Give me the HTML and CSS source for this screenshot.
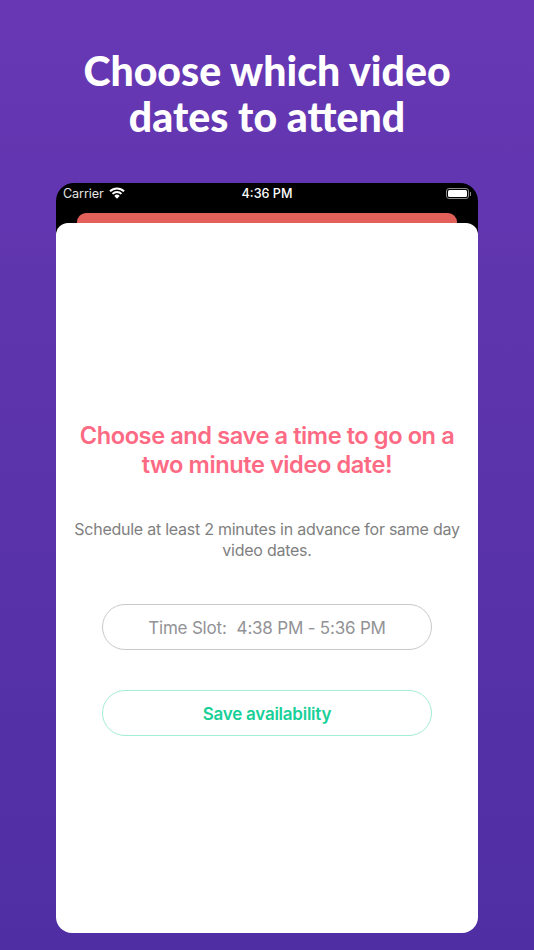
FILE: index.html
```html
<!DOCTYPE html>
<html lang="en">
<head>
<meta charset="utf-8">
<title>Choose which video dates to attend</title>
<link rel="stylesheet" href="styles.css">
</head>
<body>
<main class="screen">
  <h1 class="headline">Choose which video<br>dates to attend</h1>
  <section class="phone">
    <header class="phone-top">
      <div class="status">
        <div class="status-left">
          <span>Carrier</span>
          <svg class="wifi" viewBox="0 0 16 12" width="16" height="12" aria-hidden="true">
            <path d="M8 11.8 5.3 8.9a3.8 3.8 0 0 1 5.4 0Z" fill="#fff"/>
            <path d="M3.5 6.9a6.3 6.3 0 0 1 9 0" fill="none" stroke="#fff" stroke-width="2"/>
            <path d="M1 4.3a9.9 9.9 0 0 1 14 0" fill="none" stroke="#fff" stroke-width="2"/>
          </svg>
        </div>
        <span class="clock">4:36 PM</span>
        <div class="status-right">
          <span class="battery"><span class="battery-fill"></span></span>
          <span class="battery-cap"></span>
        </div>
      </div>
      <div class="sheet-edge"></div>
    </header>
    <div class="card">
      <h2 class="card-title">Choose and save a time to go on a<br>two minute video date!</h2>
      <p class="card-note">Schedule at least 2 minutes in advance for same day<br>video dates.</p>
      <button class="pill pill-slot" type="button"><span class="slot-label">Time Slot:</span><span>4:38 PM - 5:36 PM</span></button>
      <button class="pill pill-save" type="button">Save availability</button>
    </div>
  </section>
</main>
</body>
</html>
```
FILE: styles.css
```css
* { box-sizing: border-box; }
html, body { margin: 0; padding: 0; }
body { width: 534px; height: 950px; overflow: hidden; }
.screen {
  width: 534px;
  height: 950px;
  padding: 48px 56px 17px;
  display: flex;
  flex-direction: column;
  background: linear-gradient(180deg, #6838b4 0%, #5f35ae 30%, #4f2ea3 100%);
}
.headline {
  margin: 0 0 43px;
  height: 92px;
  font: 900 41px/46px Lato, sans-serif;
  color: #fff;
  text-align: center;
  white-space: nowrap;
}
.phone { flex: 1; display: flex; flex-direction: column; min-height: 0; }
.phone-top {
  background: #000;
  height: 52px;
  margin-bottom: -12px;
  border-radius: 18px 18px 0 0;
  display: flex;
  flex-direction: column;
}
.status {
  height: 30px;
  padding: 1px 7px 9px;
  display: grid;
  grid-template-columns: 1fr auto 1fr;
  align-items: center;
  color: #fff;
  font: 400 12.6px/20px Inter, sans-serif;
}
.status-left { display: flex; align-items: center; gap: 5px; color: #e4e4e4; letter-spacing: -0.1px; }
.wifi { margin-top: -3px; }
.clock { font-weight: 500; }
.status-right { display: flex; justify-content: flex-end; align-items: center; margin-top: -1px; }
.battery {
  width: 23px;
  height: 11px;
  border: 1px solid #8a8a8a;
  border-radius: 3px;
  padding: 1px;
  display: flex;
}
.battery-fill { flex: 1; background: #fff; border-radius: 1.5px; }
.battery-cap { width: 1px; height: 4px; background: #8a8a8a; margin-left: 1px; }
.sheet-edge {
  flex: 1;
  margin: 0 21px;
  background: #e2605a;
  border-radius: 9px 9px 0 0;
}
.card {
  position: relative;
  flex: 1;
  background: #fff;
  border-radius: 12px 12px 16px 16px;
  padding: 198px 0 0;
  display: flex;
  flex-direction: column;
  align-items: center;
}
.card-title {
  margin: 0 0 40px;
  font: 600 23.6px/29px Inter, sans-serif;
  letter-spacing: -0.42px;
  color: #fd6a84;
  text-align: center;
  white-space: nowrap;
}
.card-note {
  margin: 0 0 43px;
  font: 400 16px/21px Inter, sans-serif;
  letter-spacing: -0.25px;
  color: #7f7f7f;
  text-align: center;
  white-space: nowrap;
}
.pill {
  width: 330px;
  height: 46px;
  flex: none;
  background: #fff;
  border-radius: 23px;
  padding: 1px 0 0;
  display: flex;
  align-items: center;
  justify-content: center;
  text-align: center;
}
.pill-slot {
  border: 1px solid #c9c9c9;
  color: #929296;
  font: 400 17px/24px Inter, sans-serif;
  letter-spacing: -0.2px;
  gap: 10px;
  margin-bottom: 40px;
}
.pill-save {
  border: 1px solid #a4ecd3;
  color: #18d098;
  font: 600 17px/24px Inter, sans-serif;
  letter-spacing: -0.25px;
}
```
